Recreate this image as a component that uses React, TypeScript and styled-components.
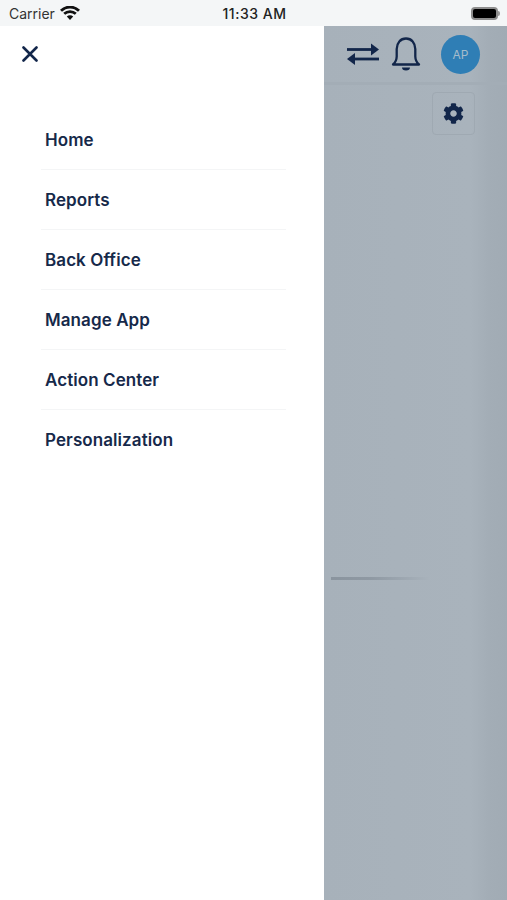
import { FC } from "react";
import styled, { createGlobalStyle } from "styled-components";
import { FaCog } from "react-icons/fa";

const menuItems = ["Home", "Reports", "Back Office", "Manage App", "Action Center", "Personalization"];

const App: FC = () => {
  return (
    <Page>
      <GlobalStyle />
      <StatusBar>
        <StatusLeft>
          <Carrier>Carrier</Carrier>
          <svg width="20" height="14" viewBox="0 0 20 14">
            <path d="M1 4.800C6 -.2 14 -.2 19 4.800" fill="none" stroke="#111" strokeWidth="2.800" />
            <path d="M4.200 7.800c3.300-3 8.300-3 11.600 0" fill="none" stroke="#111" strokeWidth="2.800" />
            <path d="M6.800 10.400c1.900-1.400 4.500-1.400 6.400 0L10 14z" fill="#111" />
          </svg>
        </StatusLeft>
        <Time>11:33 AM</Time>
        <BatteryWrap>
          <Battery />
          <BatteryNub />
        </BatteryWrap>
      </StatusBar>
      <Main>
        <Drawer>
          <CloseButton>
            <svg width="16" height="16" viewBox="0 0 16 16">
              <path d="M1.500 1.500l13 13M14.500 1.500l-13 13" stroke="#12264a" strokeWidth="2.600" strokeLinecap="round" />
            </svg>
          </CloseButton>
          <Menu>
            {menuItems.map((item, i) => (
              <MenuItem key={item} $last={i === menuItems.length - 1}>{item}</MenuItem>
            ))}
          </Menu>
        </Drawer>
        <Backdrop>
          <Header>
            <svg width="34" height="24" viewBox="0 0 34 24">
              <path d="M1 7.500h26" stroke="#12264a" strokeWidth="2.800" />
              <path d="M25 1.500l8 6-8 6z" fill="#12264a" />
              <path d="M33 17h-26" stroke="#12264a" strokeWidth="2.800" />
              <path d="M9 11l-8 6 8 6z" fill="#12264a" />
            </svg>
            <svg width="30" height="34" viewBox="0 0 30 34">
              <path
                d="M2 27.500c2.400-2 3.600-4.500 3.700-8V12C5.800 5.800 9.500 1.500 15 1.500S24.200 5.800 24.300 12v7.500c.1 3.500 1.300 6 3.700 8z"
                fill="none"
                stroke="#12264a"
                strokeWidth="2.300"
                strokeLinejoin="round"
              />
              <path d="M11 30.500h8a4 3 0 0 1-8 0z" fill="#12264a" />
            </svg>
            <Avatar>AP</Avatar>
          </Header>
          <Toolbar>
            <GearButton>
              <FaCog size={21} color="#12264a" />
            </GearButton>
          </Toolbar>
          <Streak />
        </Backdrop>
      </Main>
    </Page>
  );
};

const GlobalStyle = createGlobalStyle`
  html, body {
    margin: 0;
    padding: 0;
    background: #a9b3bc;
  }
`;

const Page = styled.div`
  width: 507px;
  height: 900px;
  display: flex;
  flex-direction: column;
  overflow: hidden;
  font-family: Inter, "Liberation Sans", sans-serif;
`;

const StatusBar = styled.div`
  height: 26px;
  flex: none;
  display: grid;
  grid-template-columns: 1fr auto 1fr;
  align-items: center;
  padding: 0 7px 0 9px;
  background: #f4f6f7;
`;

const StatusLeft = styled.div`
  display: flex;
  align-items: center;
  gap: 5px;
`;

const Carrier = styled.span`
  font-size: 14px;
  color: #333;
`;

const Time = styled.span`
  font-size: 14px;
  font-weight: 500;
  color: #222;
  letter-spacing: 0.5px;
`;

const BatteryWrap = styled.div`
  justify-self: end;
  display: flex;
  align-items: center;
`;

const Battery = styled.div`
  width: 27px;
  height: 13px;
  box-sizing: border-box;
  border: 2px solid #8d8d8d;
  border-radius: 4px;
  background: #000;
`;

const BatteryNub = styled.div`
  width: 2px;
  height: 5px;
  border-radius: 0 2px 2px 0;
  background: #999;
`;

const Main = styled.div`
  flex: 1;
  display: flex;
`;

const Drawer = styled.div`
  width: 324px;
  flex: none;
  background: #fff;
`;

const CloseButton = styled.div`
  display: flex;
  padding: 20px 0 0 22px;
  height: 64px;
  box-sizing: border-box;
`;

const Menu = styled.div`
  margin: 20px 38px 0 41px;
`;

const MenuItem = styled.div<{ $last: boolean }>`
  height: 60px;
  box-sizing: border-box;
  display: flex;
  align-items: center;
  padding-left: 4px;
  font-size: 17px;
  font-weight: 600;
  letter-spacing: 0.08px;
  color: #16294a;
  border-bottom: 1px solid ${(p) => (p.$last ? "transparent" : "#f4f5f6")};
`;

const Backdrop = styled.div`
  flex: 1;
  display: flex;
  flex-direction: column;
  background: linear-gradient(90deg, #a7b1ba 0%, #a9b3bc 80%, #a3adb6 90%, #a1abb4 100%);
`;

const Header = styled.div`
  height: 59px;
  flex: none;
  box-sizing: border-box;
  display: flex;
  align-items: center;
  padding: 0 27px 0 22px;
  border-bottom: 3px solid #a3adb6;

  svg:first-child {
    margin-right: 11px;
  }
`;

const Avatar = styled.div`
  width: 39px;
  height: 39px;
  margin-left: 20px;
  border-radius: 50%;
  background: #2f7eb5;
  color: #a6bccb;
  font-size: 12px;
  display: flex;
  align-items: center;
  justify-content: center;
`;

const Toolbar = styled.div`
  display: flex;
  justify-content: flex-end;
  padding: 7px 32px 0 0;
`;

const GearButton = styled.div`
  width: 43px;
  height: 43px;
  box-sizing: border-box;
  display: flex;
  align-items: center;
  justify-content: center;
  border: 1px solid #9fa9b2;
  border-radius: 4px;
`;

const Streak = styled.div`
  width: 100px;
  height: 3px;
  margin: 442px 0 0 7px;
  background: linear-gradient(90deg, #8a949e 0%, #8f99a3 40%, #a9b3bc 100%);
`;

export default App;
